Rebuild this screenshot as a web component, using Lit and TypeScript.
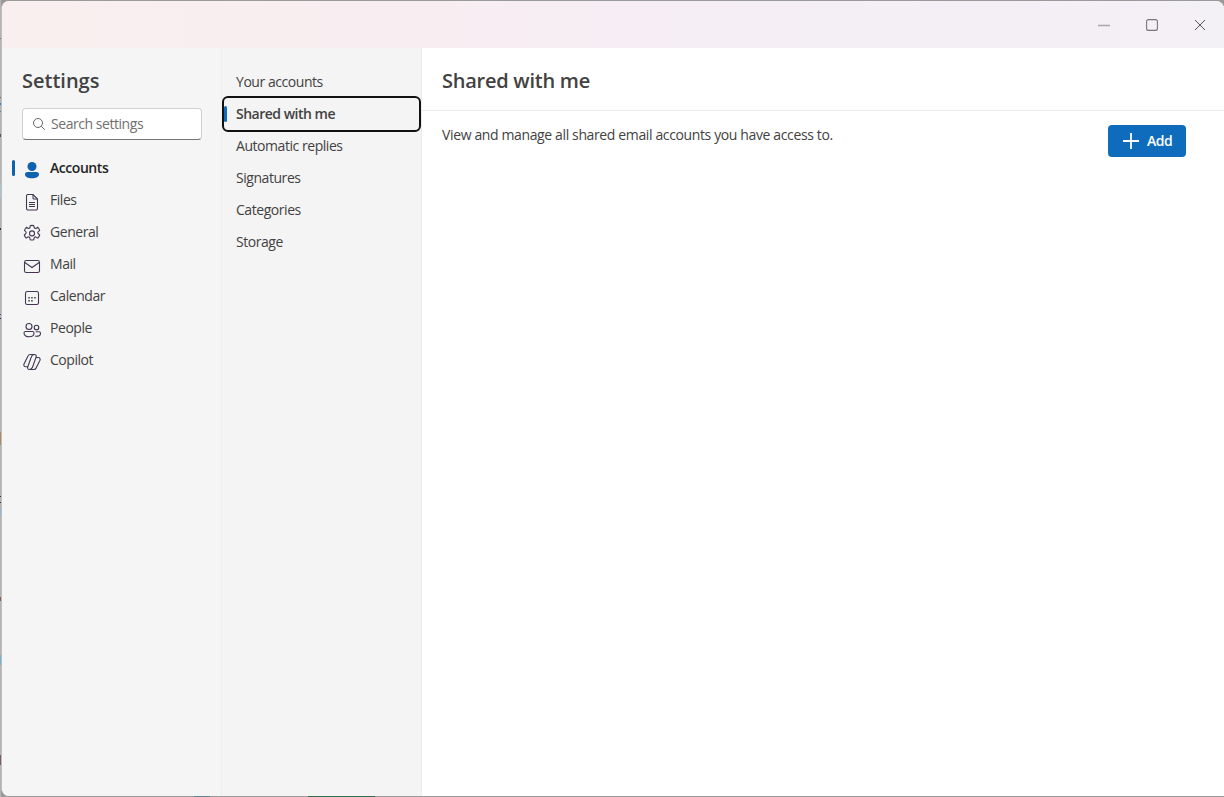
import { LitElement, html, css, svg } from "lit";
import { customElement } from "lit/decorators.js";

const stroke = (inner: unknown) => html`<svg class="ic" width="20" height="20" viewBox="0 0 20 20" fill="none" stroke="url(#g)" stroke-width="1.100">${inner}</svg>`;

const icons: Record<string, unknown> = {
  Accounts: html`<svg class="ic" width="20" height="20" viewBox="0 0 20 20" fill="#0f62ad"><circle cx="10" cy="6.500" r="4.500"/><path d="M5.500 12h9a2.500 2.500 0 0 1 2.500 2.500c0 2.300-3 3.700-7 3.700s-7-1.400-7-3.700A2.500 2.500 0 0 1 5.500 12z"/></svg>`,
  Files: stroke(svg`<path d="M5.500 2.500h5.500l4.500 4.500v9.500a1.500 1.500 0 0 1-1.500 1.500H5.500A1.500 1.500 0 0 1 4.500 16.500V4a1.500 1.500 0 0 1 1-1.500z"/><path d="M11 2.500V6a1 1 0 0 0 1 1h3.500M7 10.500h6M7 12.500h6M7 14.500h6"/>`),
  General: stroke(svg`<g transform="translate(0 -.6)"><circle cx="10" cy="10" r="2.500"/><path d="M8.300 2.200a8 8 0 0 1 3.400 0l.5 1.900a1.300 1.300 0 0 0 1.900.8l1.700-1a8.300 8.300 0 0 1 1.900 3.100l-1.400 1.300a1.300 1.300 0 0 0 0 2l1.400 1.300a8.300 8.300 0 0 1-1.900 3.100l-1.700-1a1.300 1.300 0 0 0-1.900.8l-.5 1.900a8 8 0 0 1-3.400 0l-.5-1.900a1.300 1.300 0 0 0-1.900-.8l-1.700 1a8.300 8.300 0 0 1-1.900-3.100l1.400-1.300a1.300 1.300 0 0 0 0-2L2.500 7a8.300 8.300 0 0 1 1.900-3.100l1.700 1A1.300 1.300 0 0 0 8 4.100z"/></g>`),
  Mail: stroke(svg`<rect x="2.500" y="4.500" width="15" height="12" rx="1.800"/><path d="M2.800 6.500L10 11.500l7.200-5"/>`),
  Calendar: stroke(svg`<rect x="3.500" y="3.500" width="13" height="13" rx="1.800"/><path d="M3.500 7h13"/><g fill="#3b3a48" stroke="none"><rect x="6.300" y="9" width="1.500" height="1.500"/><rect x="9.200" y="9" width="1.500" height="1.500"/><rect x="12.200" y="9" width="1.500" height="1.500"/><rect x="6.300" y="12" width="1.500" height="1.500"/><rect x="9.200" y="12" width="1.500" height="1.500"/></g>`),
  People: stroke(svg`<circle cx="7" cy="6.500" r="3"/><circle cx="14.500" cy="7.500" r="2.300"/><path d="M3.500 11.500h7a1.500 1.500 0 0 1 1.500 1.500c0 2.200-2 3.800-5 3.800s-5-1.600-5-3.800a1.500 1.500 0 0 1 1.500-1.500z"/><path d="M13 16c.5.100 1 .2 1.500.2 2.400 0 4-1.200 4-2.800 0-1-.7-1.600-1.500-1.600h-3.300"/>`),
  Copilot: stroke(svg`<path d="M12.500 2.500H8.300c-1.100 0-1.900.6-2.300 1.600L2 12c-.6 1.500.3 2.800 1.800 2.800H6"/><path d="M7.500 17.500H12c1 0 1.700-.5 2.100-1.500L18 8.300c.6-1.500-.4-2.800-1.800-2.800H14"/><path d="M12.500 2.500c1.500 0 2.100 1.200 1.700 2.300L10.600 15c-.5 1.500-1.600 2.500-3.100 2.500s-2.300-1.200-1.800-2.500L9.300 5c.4-1.400 1.700-2.500 3.200-2.500z"/>`),
};

const nav = ["Accounts", "Files", "General", "Mail", "Calendar", "People", "Copilot"];
const sub = ["Your accounts", "Shared with me", "Automatic replies", "Signatures", "Categories", "Storage"];

@customElement("app-root")
export class AppRoot extends LitElement {
  static styles = css`
    :host {
      display: block;
      width: 1224px;
      height: 797px;
      background-color: #9a9a9a;
      background-image:
        linear-gradient(to bottom,
          #b4b4b4 0 38px, #7a7a7a 38px 39px, #b4b4b4 39px 97px, #6d6d6d 97px 98px, #b4b4b4 98px 103px,
          #2a7fd0 103px 105px, #b4b4b4 105px 111px, #6a7f95 111px 112px, #b4b4b4 112px 134px,
          #555 134px 137px, #b4b4b4 137px 183px, #a9c4d6 183px 198px, #b4b4b4 198px 228px,
          #333 228px 230px, #b4b4b4 230px 314px, #2a62b8 314px 315px, #b4b4b4 315px 318px, #333 318px 319px,
          #b4b4b4 319px 432px, #b08a5e 432px 445px, #b4b4b4 445px 496px, #333 496px 497px,
          #b4b4b4 497px 502px, #333 502px 503px, #b4b4b4 503px 508px, #8fb6e0 508px 515px,
          #b4b4b4 515px 597px, #8a5a4a 597px 601px, #b4b4b4 601px 655px, #6fb5d8 655px 665px,
          #b4b4b4 665px 755px, #7a5a68 755px 765px, #b4b4b4 765px),
        linear-gradient(to right,
          #9a9a9a 0 194px, #5e8493 194px 210px, #9a9a9a 210px 308px, #2f6e4f 308px 375px, #9a9a9a 375px);
      background-size: 1px 100%, 100% 1px;
      background-position: left top, left bottom;
      background-repeat: no-repeat;
      font-family: "Open Sans", "Noto Sans", sans-serif;
      color: #424242;
      font-size: 14px;
      overflow: hidden;
    }
    .defs { position: absolute; width: 0; height: 0; }
    .window {
      box-sizing: border-box;
      height: 795px;
      margin: 1px 0 0 1px;
      border-left: 1px solid #bdbdbd;
      border-radius: 8px 8px 0 8px;
      overflow: hidden;
      display: flex;
      flex-direction: column;
      background: #fff;
    }
    .titlebar {
      height: 47px;
      flex: none;
      display: flex;
      justify-content: flex-end;
      background: linear-gradient(90deg, #f9efee 0%, #f8eef2 35%, #f5eef5 60%, #f3f0f6 100%);
    }
    .wbtn { width: 48px; height: 47px; display: flex; align-items: center; justify-content: center; }
    .body { flex: 1; display: flex; min-height: 0; }
    .side {
      width: 219px;
      flex: none;
      background: #f5f5f5;
      border-right: 1px solid #eeeeee;
      display: flex;
      flex-direction: column;
    }
    h1 {
      margin: 19px 0 1px 20px;
      font-size: 20px;
      line-height: 27px;
      font-weight: 600;
      color: #424242;
    }
    .search {
      box-sizing: border-box;
      margin: 13px 0 12px 20px;
      width: 180px;
      height: 32px;
      background: #fff;
      border: 1px solid #d1d1d1;
      border-bottom-color: #757575;
      border-radius: 4px;
      display: flex;
      align-items: center;
      gap: 4px;
      padding-left: 8px;
      color: #707070;
      letter-spacing: -0.45px;
    }
    .search span { margin-bottom: 2px; }
    .navrow {
      position: relative;
      height: 32px;
      display: flex;
      align-items: center;
      padding-left: 20px;
      gap: 8px;
      letter-spacing: -0.45px;
      white-space: nowrap;
    }
    .navrow span { margin-bottom: 2px; }
    .navrow.on { font-weight: 600; color: #242424; }
    .navrow.on::before {
      content: "";
      position: absolute;
      left: 10px;
      top: 8px;
      width: 3px;
      height: 16px;
      border-radius: 2px;
      background: #0f62ad;
    }
    .ic { flex: none; margin-top: 4px; }
    .subp {
      width: 200px;
      flex: none;
      box-sizing: border-box;
      background: #f4f4f4;
      border-right: 1px solid #ececec;
      padding-top: 18px;
    }
    .subrow {
      position: relative;
      box-sizing: border-box;
      height: 32px;
      padding: 0 0 2px 14px;
      display: flex;
      align-items: center;
      letter-spacing: -0.45px;
      white-space: nowrap;
    }
    .subrow.on {
      font-weight: 600;
      letter-spacing: -0.5px;
      height: 36px;
      margin: -2px 0;
      border: 2px solid #111;
      border-radius: 6px;
      padding-left: 12px;
    }
    .subrow.on::before {
      content: "";
      position: absolute;
      left: 0;
      top: 8px;
      width: 3px;
      height: 16px;
      border-radius: 2px;
      background: #0f6cbd;
    }
    .main { flex: 1; min-width: 0; background: #fff; }
    .mhead {
      box-sizing: border-box;
      height: 63px;
      border-bottom: 1px solid #ebebeb;
      padding: 19px 0 0 20px;
      font-size: 20px;
      line-height: 27px;
      font-weight: 600;
      letter-spacing: -0.25px;
    }
    .mrow {
      display: flex;
      justify-content: space-between;
      align-items: flex-start;
      padding: 14px 38px 0 20px;
    }
    .mtext { line-height: 20px; letter-spacing: -0.37px; }
    button {
      box-sizing: border-box;
      width: 78px;
      height: 32px;
      border: none;
      border-radius: 4px;
      background: #0f6cbd;
      color: #fff;
      font: 600 14px "Open Sans", sans-serif;
      letter-spacing: -0.45px;
      display: flex;
      align-items: center;
      gap: 7px;
      padding: 0 0 0 14px;
    }
    button span { margin-bottom: 2px; }
  `;

  render() {
    return html`
      <svg class="defs"><defs><linearGradient id="g" x1="0" y1="0" x2="1" y2="1">
        <stop offset="0" stop-color="#3a3f55"/><stop offset="1" stop-color="#4a2f4f"/>
      </linearGradient></defs></svg>
      <div class="window">
        <div class="titlebar">
          <div class="wbtn"><svg width="12" height="12" viewBox="0 0 12 12" stroke="#a8a6ab" stroke-width="1.500"><path d="M0 6.500h12"/></svg></div>
          <div class="wbtn"><svg width="12" height="12" viewBox="0 0 12 12" fill="none" stroke="#77757b" stroke-width="1.100"><rect x=".6" y=".6" width="10.800" height="10.800" rx="2"/></svg></div>
          <div class="wbtn"><svg width="12" height="12" viewBox="0 0 12 12" fill="none" stroke="#55545a" stroke-width="1"><path d="M1 1l10 10M11 1L1 11"/></svg></div>
        </div>
        <div class="body">
          <div class="side">
            <h1>Settings</h1>
            <div class="search">
              <svg width="16" height="16" viewBox="0 0 16 16" fill="none" stroke="#666" stroke-width="1"><circle cx="7" cy="7" r="4.500"/><path d="M10.300 10.300l3.500 3.500"/></svg>
              <span>Search settings</span>
            </div>
            ${nav.map((n, i) => html`<div class="navrow ${i === 0 ? "on" : ""}">${icons[n]}<span>${n}</span></div>`)}
          </div>
          <div class="subp">
            ${sub.map((s, i) => html`<div class="subrow ${i === 1 ? "on" : ""}">${s}</div>`)}
          </div>
          <div class="main">
            <div class="mhead">Shared with me</div>
            <div class="mrow">
              <div class="mtext">View and manage all shared email accounts you have access to.</div>
              <button>
                <svg width="18" height="18" viewBox="0 0 18 18" stroke="#fff" stroke-width="1.800"><path d="M9 1v16M1 9h16"/></svg>
                <span>Add</span>
              </button>
            </div>
          </div>
        </div>
      </div>
    `;
  }
}
